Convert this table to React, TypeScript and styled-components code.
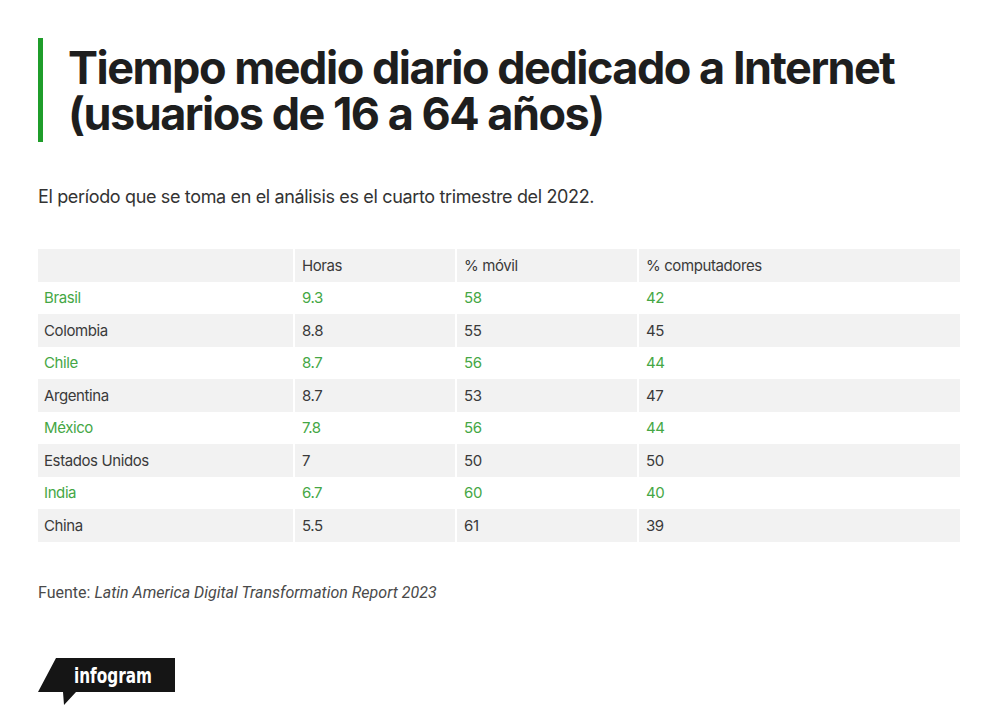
import React from "react";
import styled, { createGlobalStyle } from "styled-components";

const GlobalStyle = createGlobalStyle`
  html, body {
    margin: 0;
    padding: 0;
    background: #ffffff;
  }
  body {
    font-family: Inter, "Liberation Sans", Arial, sans-serif;
    color: #333333;
  }
`;

interface Row {
  country: string;
  hours: string;
  mobile: string;
  desktop: string;
}

const rows: Row[] = [
  { country: "Brasil", hours: "9.3", mobile: "58", desktop: "42" },
  { country: "Colombia", hours: "8.8", mobile: "55", desktop: "45" },
  { country: "Chile", hours: "8.7", mobile: "56", desktop: "44" },
  { country: "Argentina", hours: "8.7", mobile: "53", desktop: "47" },
  { country: "México", hours: "7.8", mobile: "56", desktop: "44" },
  { country: "Estados Unidos", hours: "7", mobile: "50", desktop: "50" },
  { country: "India", hours: "6.7", mobile: "60", desktop: "40" },
  { country: "China", hours: "5.5", mobile: "61", desktop: "39" },
];

const Page = styled.div`
  width: 1000px;
  height: 728px;
  box-sizing: border-box;
  padding: 38px 40px 0 38px;
  display: flex;
  flex-direction: column;
`;

const TitleBlock = styled.div`
  border-left: 5px solid #1f9d2a;
  padding: 7px 0 3px 25px;
  height: 104px;
  box-sizing: border-box;
`;

const Title = styled.h1`
  margin: 0;
  font-family: Inter, "Liberation Sans", sans-serif;
  font-weight: 700;
  font-size: 45px;
  line-height: 46px;
  letter-spacing: -1.5px;
  color: #1e1e1e;
`;

const TitleLine = styled.span`
  display: block;
  height: 46px;
`;

const Subtitle = styled.p`
  margin: 43px 0 0 0;
  font-size: 18px;
  line-height: 24px;
  letter-spacing: -0.35px;
  color: #333333;
`;

const Table = styled.div`
  margin-top: 40px;
  display: grid;
  grid-template-columns: 255px 162px 182px 1fr;
  grid-auto-rows: 32.5px;
`;

const Cell = styled.div<{ $shade: boolean; $green: boolean; $first: boolean }>`
  display: flex;
  align-items: center;
  padding-left: ${(p) => (p.$first ? "6px" : "7px")};
  background: ${(p) => (p.$shade ? "#f2f2f2" : "#ffffff")};
  border-left: ${(p) => (p.$first ? "none" : "2px solid #ffffff")};
  color: ${(p) => (p.$green ? "#45a745" : "#3a3a3a")};
  font-size: 15px;
  letter-spacing: -0.4px;
`;

const Source = styled.p`
  margin: 41px 0 0 0;
  font-family: Roboto, "Liberation Sans", sans-serif;
  font-size: 16px;
  line-height: 20px;
  color: #4a4a4a;
`;

const SourceTitle = styled.em`
  font-style: italic;
`;

const LogoWrap = styled.div`
  margin-top: 54px;
  width: 140px;
  height: 50px;
`;

const Logo = () => (
  <svg width="140" height="50" viewBox="0 0 140 50">
    <polygon points="18,1 137,1 137,35 38,35 26,48 25,35 0,35" fill="#151515" />
    <text
      x="36"
      y="26"
      fill="#ffffff"
      fontFamily="'DejaVu Sans Condensed', 'DejaVu Sans', sans-serif"
      fontWeight="700"
      fontSize="21"
      textLength="78"
      lengthAdjust="spacingAndGlyphs"
    >
      infogram
    </text>
  </svg>
);

const headers = ["", "Horas", "% móvil", "% computadores"];

export default function App() {
  return (
    <>
      <GlobalStyle />
      <Page>
        <TitleBlock>
          <Title>
            <TitleLine>Tiempo medio diario dedicado a Internet</TitleLine>
            <TitleLine>(usuarios de 16 a 64 años)</TitleLine>
          </Title>
        </TitleBlock>
        <Subtitle>El período que se toma en el análisis es el cuarto trimestre del 2022.</Subtitle>
        <Table>
          {headers.map((h, i) => (
            <Cell key={"h" + i} $shade $green={false} $first={i === 0}>
              {h}
            </Cell>
          ))}
          {rows.map((r, ri) => {
            const green = ri % 2 === 0;
            const shade = ri % 2 === 1;
            return [r.country, r.hours, r.mobile, r.desktop].map((v, ci) => (
              <Cell key={r.country + ci} $shade={shade} $green={green} $first={ci === 0}>
                {v}
              </Cell>
            ));
          })}
        </Table>
        <Source>
          Fuente: <SourceTitle>Latin America Digital Transformation Report 2023</SourceTitle>
        </Source>
        <LogoWrap>
          <Logo />
        </LogoWrap>
      </Page>
    </>
  );
}
